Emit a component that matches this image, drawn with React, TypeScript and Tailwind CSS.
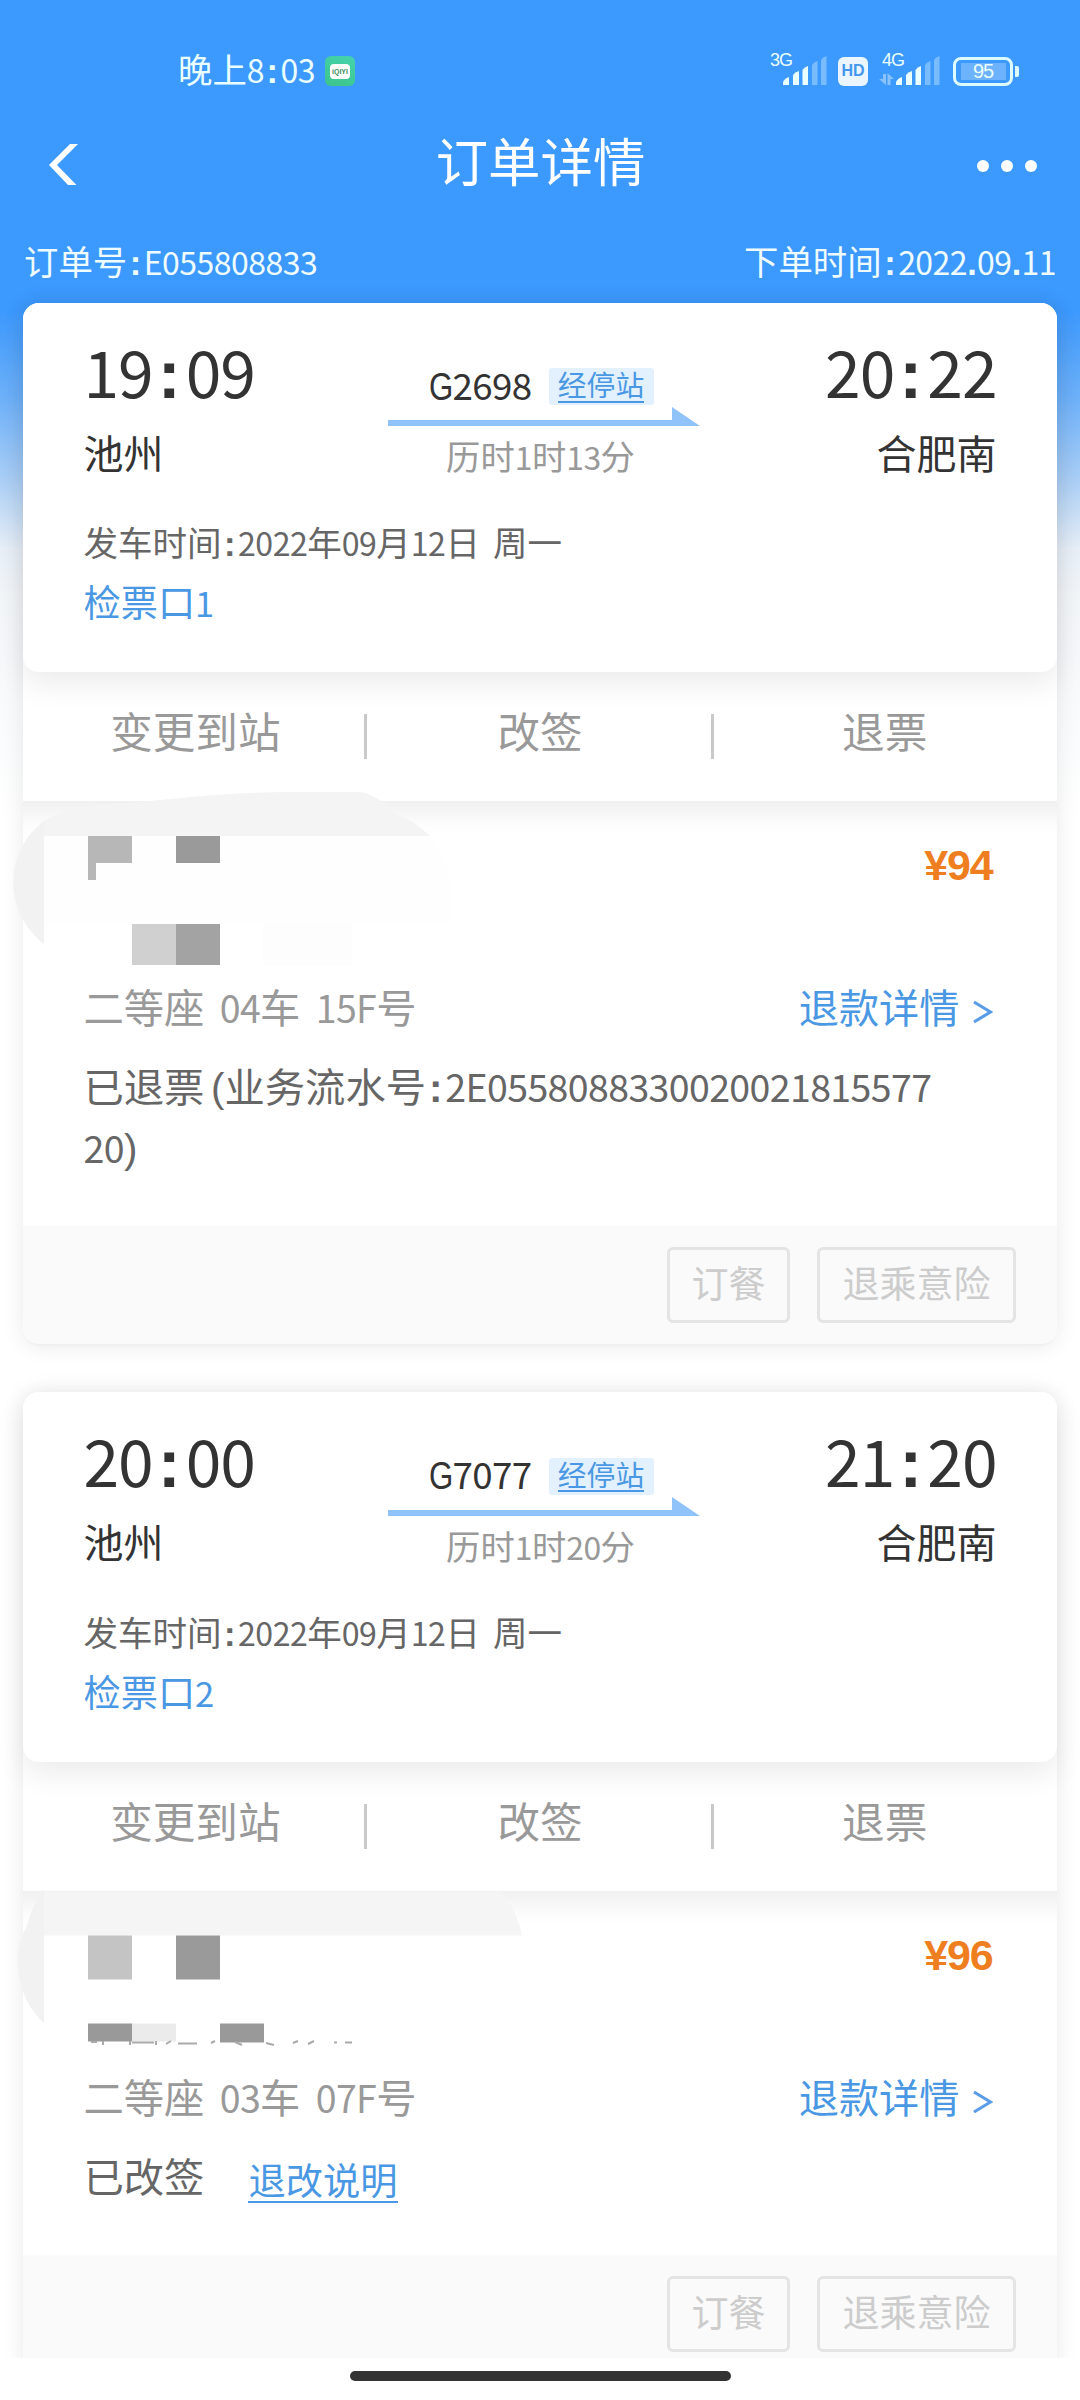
import React from "react";

type Trip = {
  depart: string;
  arrive: string;
  train: string;
  duration: string;
  gate: string;
  price: string;
  seat: string;
};

const trips: Trip[] = [
  {
    depart: "19:09",
    arrive: "20:22",
    train: "2698",
    duration: "历时1时13分",
    gate: "检票口1",
    price: "¥94",
    seat: "二等座 04车 15F号",
  },
  {
    depart: "20:00",
    arrive: "21:20",
    train: "7077",
    duration: "历时1时20分",
    gate: "检票口2",
    price: "¥96",
    seat: "二等座 03车 07F号",
  },
];

// Digits take half an em next to the Chinese characters, as does the colon
const Txt = ({ children }: { children: string }) => (
  <>
    {children.split(/([:.( ]|[EF0-9]+)/).map((part, i) => {
      if (part === ":")
        return (
          <span key={i} className="inline-block w-[0.48em] text-center font-bold">
            :
          </span>
        );
      if (part === ".")
        return (
          <span key={i} className="inline-block w-[0.29em] text-center font-bold">
            .
          </span>
        );
      if (part === "(")
        return (
          <span key={i} className="inline-block w-[0.5em] text-right">
            (
          </span>
        );
      if (part === " ")
        return (
          <span key={i} className="inline-block w-[0.38em] whitespace-pre">
            {" "}
          </span>
        );
      if (/^[EF0-9]+$/.test(part))
        return (
          <span
            key={i}
            className="font-['Noto_Sans_CJK_SC',sans-serif] text-[0.93em] leading-[0.5] tracking-[-0.016em]"
          >
            {part}
          </span>
        );
      return <span key={i}>{part}</span>;
    })}
  </>
);

const Signal = () => (
  <svg width="44" height="30" viewBox="0 0 44 30" fill="#eaffff">
    <path d="M0 29v-3q2-4 6-5v8z" />
    <path d="M10 29V19q2-3 6-4v14z" />
    <path d="M19.500 29V14q2-3 5.500-4v19z" />
    <path d="M29 29V9q2-3 5.500-4v24z" opacity=".35" />
    <path d="M38 29V4q2-3 5.500-4v29z" opacity=".35" />
  </svg>
);

const StatusBar = () => (
  <div className="flex h-[110px] items-center pt-8 pr-[61px] pl-[178px] text-[#eaffff]">
    <span className="w-[138px] text-[34.400px] leading-10 whitespace-nowrap">
      <Txt>晚上8:03</Txt>
    </span>
    <div className="ml-[9px] flex h-[30px] w-[30px] items-center justify-center rounded-[6px] bg-[linear-gradient(200deg,#43d3ae,#3dc489)]">
      <div className="flex h-[15px] w-5 items-center justify-center rounded-[4px] bg-white text-[7px] leading-none font-bold text-[#3a8f5c]">
        iQIYI
      </div>
    </div>
    <div className="ml-auto flex items-center">
      <span className="-mt-[5px] -mr-[11px] self-start pr-0.5 text-[18px] leading-none tracking-[-1px]">3G</span>
      <Signal />
      <div className="ml-[11px] flex h-[29px] w-[30px] items-center justify-center rounded-[6px] bg-[#eaf5ff] text-[16px] leading-none font-bold text-[#4397ee]">
        HD
      </div>
      <div className="relative ml-[28px]">
        <span className="absolute -top-[5px] -left-[14px] text-[18px] leading-none tracking-[-1px]">4G</span>
        <svg className="absolute bottom-0 -left-[17px]" width="15" height="13" fill="#fff" opacity=".4">
          <path d="M4 1h3v11L0 6h4zM8.500 12V0L15 6h-3.500v6z" />
        </svg>
        <Signal />
      </div>
      <div className="ml-[13px] flex h-[29px] w-[60px] items-center justify-center rounded-[8px] border-[3px] border-[#dcfbff] p-1">
        <div className="flex h-[17px] w-[45px] items-center justify-center bg-white/25 text-[20px] leading-none tracking-[-1px]">
          95
        </div>
      </div>
      <div className="ml-0.5 h-[11px] w-1 rounded-r-[2px] bg-[#dcfbff]" />
    </div>
  </div>
);

const TitleBar = () => (
  <div className="flex h-[108px] items-center justify-between pr-[43px] pl-[48px] text-white">
    <svg width="66" height="44" viewBox="0 0 66 44" className="mt-[2px]">
      <path d="M22 1h8L9 22l19.500 20H20L1 22z" fill="#fff" />
    </svg>
    <h1 className="text-[52.400px] leading-none">订单详情</h1>
    <div className="mt-1 flex w-[70px] justify-end gap-3">
      <i className="h-3 w-3 rounded-full bg-white" />
      <i className="h-3 w-3 rounded-full bg-white" />
      <i className="h-3 w-3 rounded-full bg-white" />
    </div>
  </div>
);

const TripInfo = ({ trip }: { trip: Trip }) => (
  <div className="relative h-[369.5px] rounded-[16px] bg-white px-[60.500px] shadow-[0_12px_30px_rgba(0,0,0,0.08)]">
    <div className="flex justify-between text-[#333]">
      <div className="w-[304px] pt-[37px]">
        <div className="text-[69px] leading-[69px]">
          <Txt>{trip.depart}</Txt>
        </div>
        <div className="mt-6 text-[40px] leading-[44px]">池州</div>
      </div>
      <div className="w-[312px] pt-[65.500px]">
        <div className="flex h-[37px] items-center pl-[41px]">
          <span className="w-[120px] text-[39.500px] leading-[37px] whitespace-nowrap">
            <span className="inline-block w-[24px] origin-left scale-x-[0.82] text-[38px]">G</span>
            <Txt>{trip.train}</Txt>
          </span>
          <span className="flex h-[37px] w-[105px] justify-center rounded-[3px] bg-[#e3f0fe] text-[#4a98e3]">
            <span className="h-[34.500px] border-b-[2.500px] border-[#4a98e3] text-[28.800px] leading-[36px]">
              经停站
            </span>
          </span>
        </div>
        <svg className="mt-[2px]" width="312" height="19" viewBox="0 0 312 19">
          <path d="M0 13h284V0l28 19H0z" fill="#90c3fa" />
        </svg>
        <div className="mt-[12px] pr-[6px] text-center text-[34.300px] leading-10 text-[#999]">
          <Txt>{trip.duration}</Txt>
        </div>
      </div>
      <div className="w-[297px] pt-[37px] text-right">
        <div className="text-[69px] leading-[69px]">
          <Txt>{trip.arrive}</Txt>
        </div>
        <div className="mt-6 text-[40px] leading-[44px]">合肥南</div>
      </div>
    </div>
    <div className="mt-[41px] text-[34.500px] leading-[50px] text-[#666]">
      <Txt>发车时间:2022年09月12日 周一</Txt>
    </div>
    <div className="mt-[10px] text-[37.200px] leading-[50px] text-[#4a98e3]">
      <Txt>{trip.gate}</Txt>
    </div>
  </div>
);

const Actions = () => (
  <div className="grid h-[129px] grid-cols-3 pt-[37px] text-center text-[42.600px] leading-[48px] text-[#999]">
    <div>变更到站</div>
    <div className="relative">
      <i className="absolute top-[5px] -left-[4px] h-[45px] w-[3px] bg-[#c9c9c9]" />
      改签
      <i className="absolute top-[5px] -right-[2px] h-[45px] w-[3px] bg-[#c9c9c9]" />
    </div>
    <div>退票</div>
  </div>
);

const Footer = () => (
  <div className="flex h-[120px] justify-end gap-[27px] rounded-b-[16px] border-b-2 border-[#f0f0f0] bg-[#fafafa] pt-[21px] pr-[41px] text-[37px] text-[#ccc]">
    <button className="h-[76px] w-[123px] rounded-[6px] border-[3px] border-[#e4e4e4] pt-0.5">订餐</button>
    <button className="h-[76px] w-[199px] rounded-[6px] border-[3px] border-[#e4e4e4] pt-0.5">退乘意险</button>
  </div>
);

// Covers the passenger name and the id number, origin at the card's section
const MaskOne = () => (
  <svg className="absolute -top-[10px] -left-[23px]" width="560" height="190" viewBox="0 791 560 190">
    <path
      d="M44 821C58 812 72 808 87 806L140 802C180 798 230 792 290 792H361C378 796 389 806 398 815C412 820 420 827 430 836H44Z"
      fill="#f4f4f4"
    />
    <path d="M44 836h386q16 20 20 44v44H44z" fill="#fefefe" />
    <path d="M44 821C3 852 3 912 44 944Z" fill="#f2f2f2" />
    <path d="M88 836h44v27h-36v17h-8z" fill="#b7b7b7" />
    <path d="M176 836h44v27h-44z" fill="#9a9a9a" />
    <path d="M132 924h44v41h-44z" fill="#d0d0d0" />
    <path d="M176 924h44v41h-44z" fill="#a3a3a3" />
    <path d="M263 924h89v41h-89z" fill="#fdfdfd" />
  </svg>
);

const MaskTwo = () => (
  <svg className="absolute -top-[1.500px] -left-[23px]" width="560" height="160" viewBox="0 1889 560 160">
    <path d="M44 1892H501C511 1903 519 1919 522 1935.500H44Z" fill="#f5f5f5" />
    <path d="M44 1889Q30 1910 27 1926C12 1950 14 1996 44 2023Z" fill="#f2f2f2" />
    <path d="M88 1935.500h44v44h-44z" fill="#c4c4c4" />
    <path d="M176 1935.500h44v44h-44z" fill="#9a9a9a" />
    <path d="M88 2023.500h44v18h-44z" fill="#999" />
    <path d="M132 2023.500h44v18h-44z" fill="#ebebeb" />
    <path d="M220 2023.500h44v19h-44z" fill="#999" />
    <path
      d="M91 2042h6M103 2041v4M130 2041v4M132 2042.500h22M156 2041v4M166 2044l5-3M178 2043.500h19M211 2043l4-2M235 2042l7 3M266 2043l8 2M293 2043l5-2M308 2044l6-3M334 2042.500h3M345 2042.500h7"
      stroke="#aaa"
      strokeWidth="2"
    />
  </svg>
);

const RefundLink = () => (
  <div className="flex items-center text-[40.200px] leading-[50px] text-[#4a98e3]">
    退款详情
    <svg className="mt-1 ml-[13px]" width="20" height="24" viewBox="0 0 20 24" fill="none">
      <path d="M1 2l16.500 10L1 22" stroke="#5a9de6" strokeWidth="3.200" />
    </svg>
  </div>
);

const Passenger = ({ trip, children }: { trip: Trip; children: React.ReactNode }) => (
  <div className="relative px-[60.500px] pt-[39px] shadow-[inset_0_36px_26px_-24px_rgba(0,0,0,0.07)]">
    <div className="pr-[4px] text-right text-[43px] leading-[50px] font-bold tracking-[-1.200px] text-[#ef7e20]">
      {trip.price}
    </div>
    <div className="mt-[95px] flex justify-between pr-[4px]">
      <div className="text-[40.300px] leading-[50px] text-[#999]">
        <Txt>{trip.seat}</Txt>
      </div>
      <RefundLink />
    </div>
    {children}
  </div>
);

const cardClass = "mx-[23px] rounded-[16px] bg-white shadow-[0_0_22px_rgba(0,0,0,0.09)]";

const App = () => {
  return (
    <div className="h-[2400px] w-[1080px] overflow-hidden bg-white font-['Liberation_Sans','Noto_Sans_CJK_SC',sans-serif]">
      <div className="h-[2357.500px] overflow-hidden bg-[linear-gradient(180deg,#3c99fd_0,#3c99fd_310px,#6fb2fa_400px,#abcff6_480px,#e8eff7_550px,#f3f6f9_600px,#fff_820px)]">
        <StatusBar />
        <TitleBar />
        <div className="flex h-[84.500px] items-center justify-between px-[24px] pt-[7px] text-[34.400px] text-[#eefcff]">
          <div>
            <Txt>订单号:E055808833</Txt>
          </div>
          <div>
            <Txt>下单时间:2022.09.11</Txt>
          </div>
        </div>

        <div className={cardClass}>
          <TripInfo trip={trips[0]} />
          <Actions />
          <Passenger trip={trips[0]}>
            <MaskOne />
            <div className="mt-[24px] h-[167px] text-[40.300px] leading-[60.500px] whitespace-nowrap text-[#666]">
              <div>
                <Txt>已退票(业务流水号:2E0558088330020021815577</Txt>
              </div>
              <div>
                <Txt>20)</Txt>
              </div>
            </div>
          </Passenger>
          <Footer />
        </div>

        <div className={cardClass + " mt-[46px]"}>
          <TripInfo trip={trips[1]} />
          <Actions />
          <Passenger trip={trips[1]}>
            <MaskTwo />
            <div className="mt-[24px] flex h-[106px] text-[40.300px] leading-[60.500px] text-[#666]">
              已改签
              <span className="mt-[11px] ml-[44px] h-[43.500px] border-b-[2.500px] border-[#4a98e3] text-[37.300px] leading-[44px] text-[#4a98e3]">
                退改说明
              </span>
            </div>
          </Passenger>
          <Footer />
        </div>
      </div>
      <div className="mx-auto mt-[13px] h-[10px] w-[381px] rounded-full bg-[#333]" />
    </div>
  );
};

export default App;
